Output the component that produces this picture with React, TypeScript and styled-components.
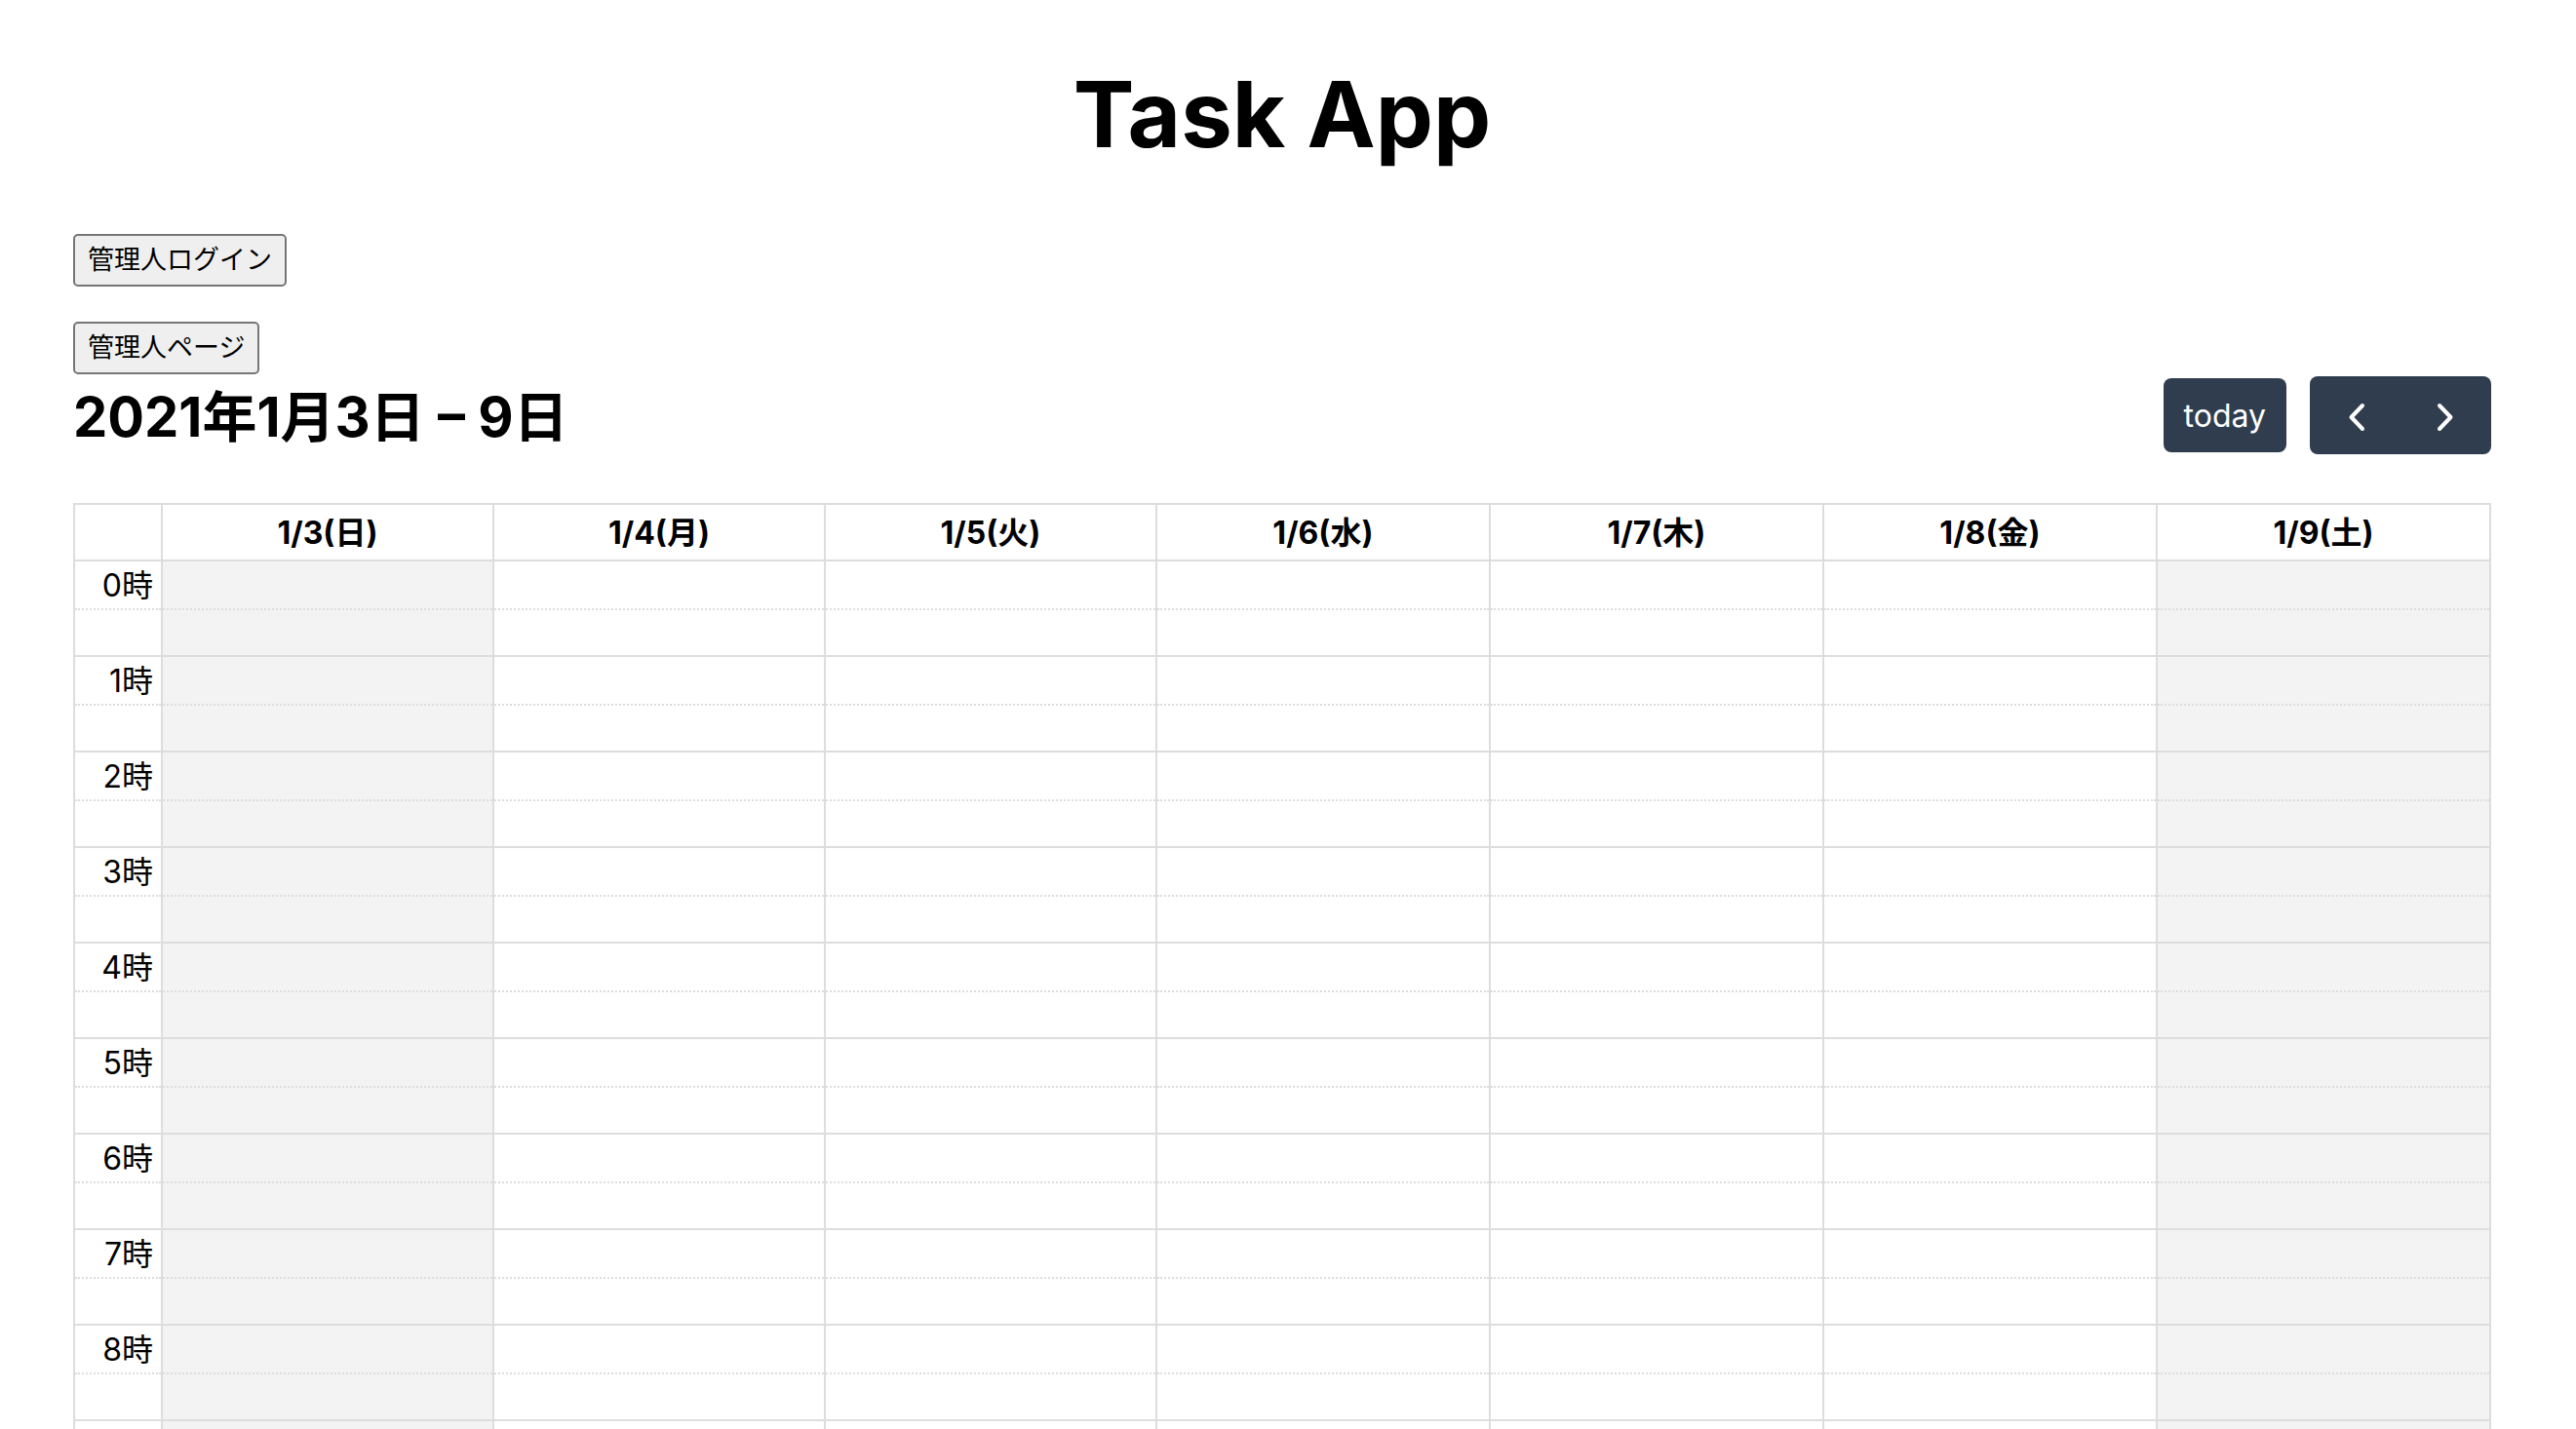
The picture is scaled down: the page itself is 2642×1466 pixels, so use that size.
import React, { useState } from "react";
import styled, { createGlobalStyle } from "styled-components";

const GlobalStyle = createGlobalStyle`
  *, *::before, *::after { box-sizing: border-box; }
  body {
    margin: 0;
    background: #fff;
    color: #000;
    font-family: Inter, "Noto Sans CJK JP", sans-serif;
    font-size: 32px;
    line-height: 48px;
  }
`;

const Page = styled.main`
  height: 100vh;
  padding: 59px 87px 0 75px;
  overflow-y: auto;
  scrollbar-width: none;
`;

const Title = styled.h1`
  margin: 0 0 65px;
  font-size: 94px;
  line-height: 116px;
  font-weight: 700;
  text-align: center;
`;

const AdminNav = styled.nav`
  display: flex;
  flex-direction: column;
  align-items: flex-start;
  gap: 36px;
`;

const AdminButton = styled.button`
  height: 54px;
  padding: 0 13px;
  border: 2px solid #767676;
  border-radius: 5px;
  background: #efefef;
  color: #000;
  font: 400 27px/48px Inter, "Noto Sans CJK JP", sans-serif;
`;

const Toolbar = styled.header`
  display: flex;
  align-items: center;
  justify-content: space-between;
  height: 84px;
  margin-bottom: 48px;
`;

const RangeTitle = styled.h2`
  margin: 0;
  padding-top: 4px;
  font-size: 56px;
  line-height: 84px;
  font-weight: 700;
`;

const ToolbarActions = styled.div`
  display: flex;
  align-items: center;
  gap: 24px;
`;

const ButtonGroup = styled.div`
  display: flex;
`;

const CalendarButton = styled.button<{ $edge?: "left" | "right" }>`
  display: flex;
  align-items: center;
  justify-content: center;
  padding: ${(p) => (p.$edge ? "16px 23px" : "15px 21px 13px")};
  border: 0;
  border-radius: ${(p) =>
    p.$edge === "left" ? "8px 0 0 8px" : p.$edge === "right" ? "0 8px 8px 0" : "8px"};
  background: #303d4f;
  color: #fff;
  font: 400 32px/48px Inter, "Noto Sans CJK JP", sans-serif;
`;

const ChevronSvg = styled.svg`
  display: block;
  width: 47px;
  height: 48px;
  fill: none;
  stroke: currentColor;
  stroke-width: 4;
  stroke-linecap: round;
  stroke-linejoin: round;
`;

const Calendar = styled.table`
  width: 100%;
  table-layout: fixed;
  border-collapse: collapse;
  border: 2px solid #ddd;
`;

const AxisCol = styled.col`
  width: 90px;
`;

const DayCol = styled.col<{ $early: boolean }>`
  width: ${(p) => (p.$early ? "13.72%" : "auto")};
`;

const CornerCell = styled.td`
  border: 2px solid #ddd;
`;

const DayHeader = styled.th`
  height: 58px;
  padding: 2px 0 0;
  border: 2px solid #ddd;
  font-weight: 700;
  line-height: 48px;
`;

const HourRow = styled.tr`
  height: 50px;
`;

const HalfRow = styled.tr`
  height: 48px;
`;

const HourLabel = styled.th`
  padding: 2px 8px 0 0;
  border: 2px solid #ddd;
  border-bottom: 2px dotted #ddd;
  font-weight: 400;
  line-height: 46px;
  text-align: right;
`;

const HalfLabel = styled.td`
  padding: 0;
  border: 2px solid #ddd;
  border-top: 2px dotted #ddd;
`;

const Slot = styled.td<{ $weekend: boolean; $half?: boolean }>`
  padding: 0;
  border: 2px solid #ddd;
  ${(p) => (p.$half ? "border-top" : "border-bottom")}: 2px dotted #ddd;
  background: ${(p) => (p.$weekend ? "#f3f3f3" : "#fff")};
`;

const WEEKDAYS = ["日", "月", "火", "水", "木", "金", "土"];
const HOURS = Array.from({ length: 24 }, (_, hour) => hour);
const DAY_MS = 86400000;
const FIRST_WEEK = Date.UTC(2021, 0, 3);

function rangeLabel(first: Date, last: Date) {
  const start = `${first.getUTCFullYear()}年${first.getUTCMonth() + 1}月${first.getUTCDate()}日`;
  const sameMonth = first.getUTCMonth() === last.getUTCMonth();
  const end = `${sameMonth ? "" : `${last.getUTCMonth() + 1}月`}${last.getUTCDate()}日`;
  return `${start} – ${end}`;
}

export default function App() {
  const [week, setWeek] = useState(0);
  const days = WEEKDAYS.map((_, i) => new Date(FIRST_WEEK + (week * 7 + i) * DAY_MS));
  const isWeekend = (i: number) => i === 0 || i === 6;

  return (
    <>
      <GlobalStyle />
      <Page>
        <Title>Task App</Title>
        <AdminNav>
          <AdminButton type="button">管理人ログイン</AdminButton>
          <AdminButton type="button">管理人ページ</AdminButton>
        </AdminNav>
        <Toolbar>
          <RangeTitle>{rangeLabel(days[0], days[6])}</RangeTitle>
          <ToolbarActions>
            <CalendarButton type="button" onClick={() => setWeek(0)}>
              today
            </CalendarButton>
            <ButtonGroup>
              <CalendarButton type="button" $edge="left" aria-label="prev" onClick={() => setWeek(week - 1)}>
                <ChevronSvg viewBox="0 0 47 48">
                  <path d="M31 14 19.5 26 31 38" />
                </ChevronSvg>
              </CalendarButton>
              <CalendarButton type="button" $edge="right" aria-label="next" onClick={() => setWeek(week + 1)}>
                <ChevronSvg viewBox="0 0 47 48">
                  <path d="M17 14 28.5 26 17 38" />
                </ChevronSvg>
              </CalendarButton>
            </ButtonGroup>
          </ToolbarActions>
        </Toolbar>
        <Calendar>
          <colgroup>
            <AxisCol />
            {WEEKDAYS.map((name, i) => (
              <DayCol key={name} $early={i < 3} />
            ))}
          </colgroup>
          <thead>
            <tr>
              <CornerCell />
              {days.map((day, i) => (
                <DayHeader key={i} scope="col">
                  {`${day.getUTCMonth() + 1}/${day.getUTCDate()}(${WEEKDAYS[i]})`}
                </DayHeader>
              ))}
            </tr>
          </thead>
          <tbody>
            {HOURS.map((hour) => (
              <React.Fragment key={hour}>
                <HourRow>
                  <HourLabel scope="row">{`${hour}時`}</HourLabel>
                  {WEEKDAYS.map((name, i) => (
                    <Slot key={name} $weekend={isWeekend(i)} />
                  ))}
                </HourRow>
                <HalfRow>
                  <HalfLabel />
                  {WEEKDAYS.map((name, i) => (
                    <Slot key={name} $weekend={isWeekend(i)} $half />
                  ))}
                </HalfRow>
              </React.Fragment>
            ))}
          </tbody>
        </Calendar>
      </Page>
    </>
  );
}
